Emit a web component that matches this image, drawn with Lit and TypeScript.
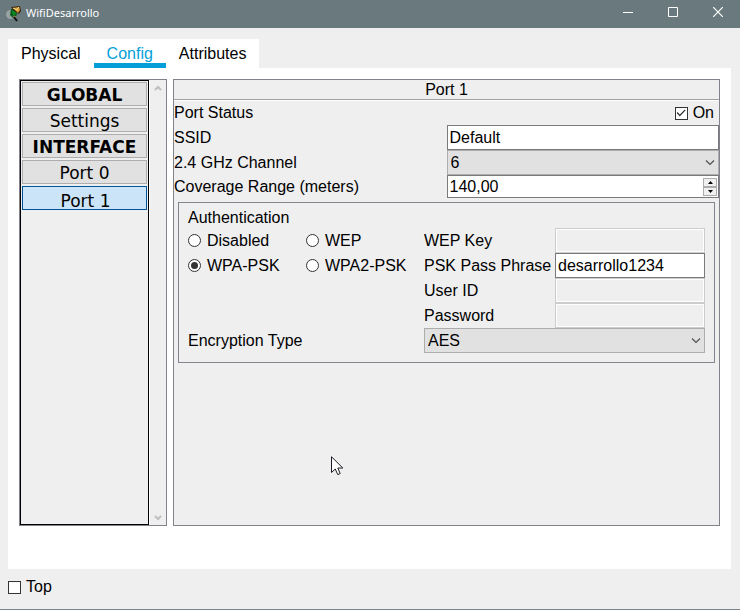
import { LitElement, html, css, svg } from "lit";
import { customElement, state } from "lit/decorators.js";

const chevron = svg`<path d="M1 1.5 L5 5.5 L9 1.5" fill="none" stroke="#505050" stroke-width="1.2"/>`;

@customElement("title-bar")
class TitleBar extends LitElement {
  static styles = css`
    :host {
      display: flex;
      align-items: center;
      height: 28px;
      padding-left: 5px;
      background: #69797e;
      color: #fff;
      font: 11px/16px "Noto Sans", sans-serif;
    }
    .logo {
      width: 17px;
      height: 17px;
      margin-right: 4px;
    }
    .name {
      flex: 1;
      margin: 0;
      padding-bottom: 2px;
      font: inherit;
    }
    .control {
      display: flex;
      align-items: center;
      box-sizing: border-box;
      width: 45px;
      height: 28px;
      padding: 0 17px 4px 18px;
      border: 0;
      background: none;
    }
    .glyph {
      flex: none;
      width: 10px;
      height: 10px;
      fill: none;
      stroke: #fff;
    }
  `;

  render() {
    return html`
      <svg class="logo" viewBox="0 0 17 17" aria-hidden="true">
        <circle cx="5.5" cy="8.5" r="4.5" fill="#9aa3a3" />
        <path d="M6 3 L11 3 L12 9 L8 12 L5 9 Z" fill="#0c5a1c" />
        <path d="M7 5 L10 4 L11 8 L8 10 Z" fill="#0a8a24" />
        <path d="M6 1 L15 0 L16 5 L14 8 L9 5 Z" fill="#3a2410" />
        <path d="M8 2 L14 1 L15 4 L13 7 L10 4 Z" fill="#d99a32" />
        <path d="M8 2 L12 4 L14 1" fill="none" stroke="#f4d88a" />
        <path d="M9 10 L10 12" stroke="#b8a05a" stroke-width="2" />
        <path d="M9 11 L12 15" stroke="#111" stroke-width="2" />
      </svg>
      <h1 class="name">WifiDesarrollo</h1>
      <button class="control" aria-label="Minimize">
        <svg class="glyph" viewBox="0 0 10 10"><path d="M0 5.5 H10" /></svg>
      </button>
      <button class="control" aria-label="Maximize">
        <svg class="glyph" viewBox="0 0 10 10"><path d="M.5 .5 H9.5 V9.5 H.5 Z" /></svg>
      </button>
      <button class="control" aria-label="Close">
        <svg class="glyph" viewBox="0 0 10 10"><path d="M0 0 L10 10 M10 0 L0 10" stroke-width="1.2" /></svg>
      </button>
    `;
  }
}

@customElement("device-nav")
class DeviceNav extends LitElement {
  @state() private selected = "Port 1";

  static styles = css`
    :host {
      display: flex;
      box-sizing: border-box;
      border: 1px solid #82828a;
      background: #efefef;
    }
    .list {
      display: flex;
      flex: 1;
      flex-direction: column;
      gap: 2px;
      padding: 1px;
      border: 1px solid #000;
    }
    .entry {
      box-sizing: border-box;
      height: 24px;
      padding: 2px 0 0;
      border: 1px solid #adadad;
      background: #e1e1e1;
      color: #000;
      font: 17px/20px "DejaVu Sans", sans-serif;
      text-align: center;
    }
    .heading {
      font-weight: bold;
    }
    .selected {
      padding: 4px 0 0 2px;
      border-color: #005499;
      background: #cce4f7;
    }
    .scroll {
      display: flex;
      flex-direction: column;
      justify-content: space-between;
      align-items: center;
      width: 16px;
      padding: 5px 0 4px;
      border-left: 1px solid #fff;
    }
    .arrow {
      width: 8px;
      height: 6px;
      fill: none;
      stroke: #bfbfbf;
      stroke-width: 2;
    }
  `;

  render() {
    const entries = [
      { text: "GLOBAL", heading: true },
      { text: "Settings", heading: false },
      { text: "INTERFACE", heading: true },
      { text: "Port 0", heading: false },
      { text: "Port 1", heading: false },
    ];
    return html`
      <nav class="list">
        ${entries.map(
          (e) => html`<button
            class="entry ${e.heading ? "heading" : ""} ${e.text === this.selected ? "selected" : ""}"
            @click=${() => (this.selected = e.text)}
          >${e.text}</button>`
        )}
      </nav>
      <div class="scroll" aria-hidden="true">
        <svg class="arrow" viewBox="0 0 8 6"><path d="M1 5 L4 2 L7 5" /></svg>
        <svg class="arrow" viewBox="0 0 8 6"><path d="M1 1 L4 4 L7 1" /></svg>
      </div>
    `;
  }
}

const fieldStyles = css`
  .field {
    box-sizing: border-box;
    width: 100%;
    min-width: 0;
    height: 25px;
    margin: 0;
    padding: 0 2px;
    border: 1px solid #7a7a7a;
    border-radius: 0;
    background: #fff;
    color: #000;
    font: inherit;
    outline: 0;
  }
  .field:disabled {
    border-color: #ccc;
    background: #efefef;
    box-shadow: inset 0 0 0 1px #fff;
  }
  .choice {
    display: grid;
    align-items: center;
  }
  .choice > * {
    grid-area: 1 / 1;
  }
  select.field {
    appearance: none;
    padding: 0 3px;
    border-color: #adadad;
    background: #e1e1e1;
  }
  .chevron {
    justify-self: end;
    width: 10px;
    height: 7px;
    margin-right: 4px;
    pointer-events: none;
  }
  .tick {
    appearance: none;
    display: grid;
    place-items: center;
    flex: none;
    box-sizing: border-box;
    width: 13px;
    height: 13px;
    margin: 0;
    border: 1px solid #333;
    background: #fff;
  }
  .tick:checked::before {
    content: "";
    width: 9px;
    height: 9px;
    background: #333;
    clip-path: polygon(0 50%, 10% 40%, 35% 68%, 90% 10%, 100% 20%, 35% 88%);
  }
  .radio {
    border-radius: 50%;
  }
  .radio:checked::before {
    width: 7px;
    height: 7px;
    border-radius: 50%;
    clip-path: none;
  }
`;

@customElement("port-config")
class PortConfig extends LitElement {
  static styles = [
    fieldStyles,
    css`
      :host {
        box-sizing: border-box;
        border: 1px solid #82828a;
        background: #efefef;
      }
      .title {
        margin: 0;
        border-bottom: 1px solid #a0a0a0;
        box-shadow: 0 1px #fff;
        font: inherit;
        line-height: 19px;
        text-align: center;
      }
      .form {
        display: grid;
        grid-template-columns: 1fr 1fr;
        align-items: center;
        padding-top: 1px;
      }
      .status {
        display: flex;
        justify-content: flex-end;
        align-items: center;
        gap: 5px;
        height: 24px;
        padding-right: 5px;
      }
      .range {
        display: flex;
        align-items: center;
        height: 23px;
        padding: 0 1px 0 2px;
      }
      .amount {
        flex: 1;
        min-width: 0;
        padding: 0;
        border: 0;
        background: none;
        font: inherit;
        outline: 0;
      }
      .spin {
        display: flex;
        flex-direction: column;
      }
      .step {
        display: grid;
        place-items: center;
        box-sizing: border-box;
        width: 14px;
        height: 9px;
        padding: 0;
        border: 1px solid #acacac;
        background: #f0f0f0;
      }
      .caret {
        width: 5px;
        height: 3px;
      }
      .group {
        display: grid;
        grid-template-columns: 118px 118px 1fr;
        grid-template-rows: 20px;
        grid-auto-rows: 25px;
        align-items: center;
        margin: 4px;
        padding: 5px 9px 9px;
        border: 1px solid #82878f;
      }
      .caption {
        grid-column: 1 / -1;
        margin: 0;
        font: inherit;
        line-height: 22px;
      }
      .option {
        display: flex;
        align-items: center;
        gap: 6px;
        white-space: nowrap;
      }
      .pair {
        display: grid;
        grid-template-columns: 131px 1fr;
        grid-column: 3;
        align-items: center;
        white-space: nowrap;
      }
      .wide {
        grid-column: 1 / 3;
      }
    `,
  ];

  private option(name: string, checked = false) {
    return html`<label class="option">
      <input class="tick radio" type="radio" name="auth" .checked=${checked} />${name}
    </label>`;
  }

  private pair(id: string, label: string, value = "") {
    return html`<div class="pair">
      <label for=${id}>${label}</label>
      <input class="field" id=${id} .value=${value} ?disabled=${!value} />
    </div>`;
  }

  render() {
    return html`
      <h2 class="title">Port 1</h2>
      <div class="form">
        <span>Port Status</span>
        <label class="status"><input class="tick" type="checkbox" checked />On</label>
        <label for="ssid">SSID</label>
        <input class="field" id="ssid" value="Default" />
        <label for="channel">2.4 GHz Channel</label>
        <div class="choice">
          <select class="field" id="channel"><option>6</option></select>
          <svg class="chevron" viewBox="0 0 10 7">${chevron}</svg>
        </div>
        <label for="range">Coverage Range (meters)</label>
        <div class="field range">
          <input class="amount" id="range" value="140,00" />
          <div class="spin">
            <button class="step" aria-label="Increase">
              <svg class="caret" viewBox="0 0 5 3"><path d="M0 3 L2.5 0 L5 3 Z" /></svg>
            </button>
            <button class="step" aria-label="Decrease">
              <svg class="caret" viewBox="0 0 5 3"><path d="M0 0 L2.5 3 L5 0 Z" /></svg>
            </button>
          </div>
        </div>
      </div>
      <section class="group">
        <h3 class="caption">Authentication</h3>
        ${this.option("Disabled")} ${this.option("WEP")} ${this.pair("wep", "WEP Key")}
        ${this.option("WPA-PSK", true)} ${this.option("WPA2-PSK")}
        ${this.pair("psk", "PSK Pass Phrase", "desarrollo1234")}
        ${this.pair("user", "User ID")} ${this.pair("password", "Password")}
        <label class="wide" for="cipher">Encryption Type</label>
        <div class="choice">
          <select class="field" id="cipher"><option>AES</option></select>
          <svg class="chevron" viewBox="0 0 10 7">${chevron}</svg>
        </div>
      </section>
    `;
  }
}

@customElement("app-root")
class AppRoot extends LitElement {
  @state() private tab = "Config";

  static styles = [
    fieldStyles,
    css`
      :host {
        position: relative;
        display: flex;
        flex-direction: column;
        box-sizing: border-box;
        min-height: 100vh;
        border-bottom: 1px solid #7b858a;
        background: #efefef;
        color: #000;
        font: 16px/20px "Liberation Sans", sans-serif;
      }
      .tabs {
        display: flex;
        align-self: flex-start;
        margin: 11px 8px 0;
        background: #fff;
      }
      .tab {
        box-sizing: border-box;
        height: 29px;
        padding: 5px 13px 0;
        border: 0;
        border-bottom: 5px solid transparent;
        background: none;
        color: #000;
        font: inherit;
      }
      .active {
        border-color: #049fd9;
        color: #049fd9;
      }
      .panel {
        display: grid;
        flex: 1;
        grid-template-columns: 148px 1fr;
        gap: 6px;
        margin: 0 9px 0 8px;
        padding: 11px 11px 43px;
        background: #fff;
      }
      .footer {
        display: flex;
        padding: 8px 8px 12px;
      }
      .pin {
        display: flex;
        align-items: center;
        gap: 5px;
      }
      .pointer {
        position: absolute;
        left: 331px;
        top: 456px;
        width: 13px;
        height: 20px;
      }
    `,
  ];

  render() {
    return html`
      <title-bar></title-bar>
      <div class="tabs" role="tablist">
        ${["Physical", "Config", "Attributes"].map(
          (t) => html`<button
            class="tab ${t === this.tab ? "active" : ""}"
            role="tab"
            aria-selected=${t === this.tab}
            @click=${() => (this.tab = t)}
          >${t}</button>`
        )}
      </div>
      <main class="panel">
        <device-nav></device-nav>
        <port-config></port-config>
      </main>
      <footer class="footer">
        <label class="pin"><input class="tick" type="checkbox" />Top</label>
      </footer>
      <svg class="pointer" viewBox="0 0 13 20" aria-hidden="true">
        <path
          d="M.5 .8 V16.5 L4.2 13 L6.8 18.6 L9.2 17.5 L6.8 12 H11.8 Z"
          fill="#fff"
          stroke="#1a1a24"
        />
      </svg>
    `;
  }
}
